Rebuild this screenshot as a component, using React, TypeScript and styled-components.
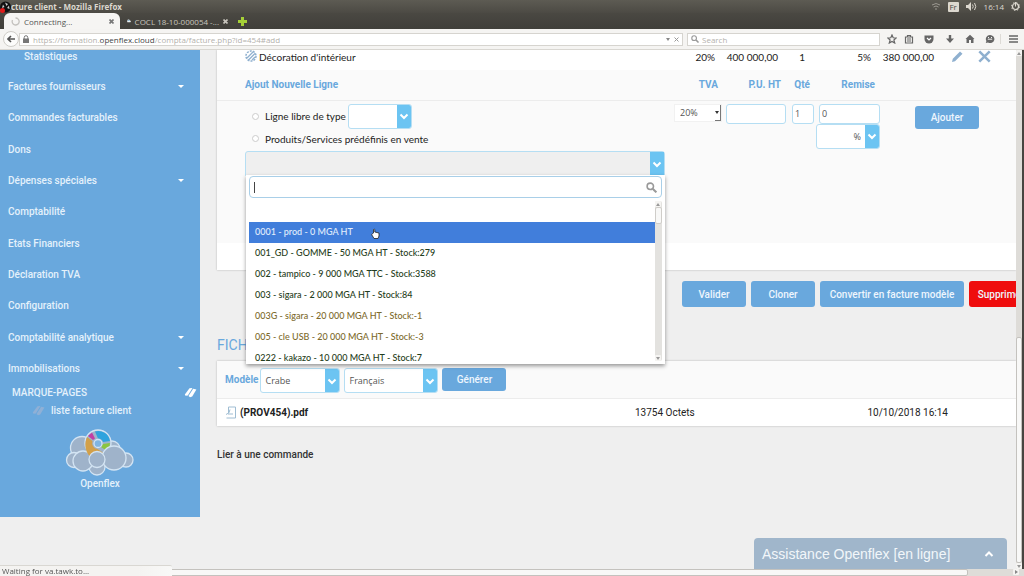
import React from "react";
import styled, { createGlobalStyle } from "styled-components";

const ui = `"Open Sans", "Noto Sans", sans-serif`;
const roboto = `Roboto, "Liberation Sans", sans-serif`;
const lato = `Lato, "Open Sans", sans-serif`;

const Global = createGlobalStyle`
  * { box-sizing: border-box; }
  body { margin: 0; background: #efefef; font-family: ${roboto}; font-size: 10px; color: #333; }
  button, input, select { font: inherit; color: inherit; margin: 0; padding: 0; }
  a { color: inherit; text-decoration: none; }
  ul { list-style: none; margin: 0; padding: 0; }
`;

const Desktop = styled.div`
  display: flex;
  flex-direction: column;
  height: 100vh;
  overflow: hidden;
`;

/* ---------- browser window ---------- */

const TitleBar = styled.header`
  display: flex;
  align-items: center;
  justify-content: space-between;
  flex: none;
  height: 13px;
  padding-right: 4px;
  background: linear-gradient(#5d5b53, #4c4a44);
  color: #dcd8cf;
  font: 8px ${ui};
`;
const WindowTitle = styled.strong`
  display: flex;
  align-items: center;
`;
const Tray = styled.div`
  display: flex;
  align-items: center;
  gap: 7px;
  line-height: 12px;
`;
const Language = styled.span`
  width: 11px;
  height: 10px;
  line-height: 10px;
  text-align: center;
  background: #dcd8cf;
  color: #4c4a44;
  border-radius: 1px;
`;
const TabStrip = styled.nav`
  display: flex;
  flex: none;
  height: 16px;
  padding-left: 4px;
  background: linear-gradient(#4a4842, #403f3a);
  color: #dcd8cf;
  font: 8px ${ui};
`;
const Tab = styled.div<{ $active?: boolean }>`
  display: flex;
  align-items: center;
  gap: 4px;
  width: ${(p) => (p.$active ? 116 : 114)}px;
  padding: 0 6px 0 7px;
  border-radius: 6px 6px 0 0;
  background: ${(p) => (p.$active ? "#f6f5f3" : "transparent")};
  color: ${(p) => (p.$active ? "#555" : "#c9c6be")};
`;
const TabTitle = styled.span`
  flex: 1;
  white-space: nowrap;
`;
const BareButton = styled.button`
  display: flex;
  align-items: center;
  justify-content: center;
  border: 0;
  background: none;
`;
const Toolbar = styled.div`
  display: flex;
  align-items: center;
  flex: none;
  height: 21px;
  padding: 0 6px 0 3px;
  background: #f5f4f2;
  border-bottom: 1px solid #d9d7d2;
  font: 8px ${ui};
  color: #b3b1ac;
`;
const BackButton = styled(BareButton)`
  width: 16px;
  height: 16px;
  border: 1px solid #cfcdc8;
  border-radius: 50%;
  background: #fcfcfb;
`;
const AddressBar = styled.div`
  display: flex;
  align-items: center;
  gap: 4px;
  flex: 1;
  height: 13px;
  padding: 0 3px;
  background: #fff;
  border: 1px solid #d6d4cf;
`;
const Address = styled.span`
  flex: 1;
  b { font-weight: 400; color: #444; }
`;
const SearchBar = styled.label`
  display: flex;
  align-items: center;
  gap: 3px;
  width: 193px;
  height: 13px;
  margin: 0 4px;
  padding: 0 3px;
  background: #fff;
  border: 1px solid #d6d4cf;
  input { flex: 1; min-width: 0; border: 0; outline: 0; background: none; }
  input::placeholder { color: #b3b1ac; }
`;
const ToolbarIcons = styled.div`
  display: grid;
  grid-template-columns: 16px 18px 22px 20px 20px 20px 18px;
  button:last-child { border-left: 1px solid #dddbd6; justify-content: flex-end; }
`;

/* ---------- page frame ---------- */

const Viewport = styled.div`
  display: flex;
  flex: 1;
  min-height: 0;
`;
const Page = styled.div`
  position: relative;
  display: flex;
  align-items: flex-start;
  flex: 1;
  min-width: 0;
  overflow: hidden;
`;
const VerticalBar = styled.div`
  display: flex;
  flex-direction: column;
  width: 8px;
  background: #dedcd8;
  border-right: 2px solid #474541;
`;
const BarSpacer = styled.div`
  flex: 282;
`;
const VerticalThumb = styled.div`
  flex: 225;
  background: #f8f8f7;
  border: 1px solid #c4c2be;
  border-radius: 2px;
`;
const BarEnd = styled.div`
  display: flex;
  align-items: center;
  justify-content: center;
  flex: none;
  width: 6px;
  height: 6px;
  background: #f5f4f2;
  border-radius: 1px;
`;
const HorizontalBar = styled.div`
  display: flex;
  justify-content: space-between;
  flex: none;
  height: 7px;
  padding-right: 5px;
  background: #dedcd8;
`;
const HorizontalThumb = styled.div`
  flex: 0 0 95%;
  background: #f8f8f7;
  border: 1px solid #c4c2be;
  border-radius: 2px;
`;
const StatusLine = styled.output`
  position: fixed;
  left: 0;
  bottom: 0;
  width: 172px;
  height: 11px;
  padding-left: 2px;
  background: linear-gradient(90deg, #f4f3f1 80%, #f8f8f7);
  border-top: 1px solid #d9d7d2;
  border-radius: 0 2px 0 0;
  font: 8px/10px ${ui};
  color: #555;
`;

/* ---------- sidebar ---------- */

const Sidebar = styled.aside`
  flex: none;
  width: 200px;
  height: 467px;
  background: #69a8dd;
  color: #e4f1fb;
  font-weight: 500;
`;
const SubLink = styled.a`
  display: block;
  height: 21px;
  padding-left: 24px;
  line-height: 13px;
`;
const Menu = styled.ul`
  display: grid;
  grid-auto-rows: 1fr;
  height: 313px;
`;
const MenuItem = styled.li`
  display: flex;
  align-items: center;
  padding: 0 16px 0 8px;
  a { flex: 1; }
`;
const Caret = styled.i`
  border: 3px solid transparent;
  border-top-color: #fff;
  border-bottom: 0;
`;
const Bookmarks = styled.div`
  display: flex;
  align-items: center;
  justify-content: space-between;
  height: 16px;
  padding: 0 3px 0 12px;
`;
const BookmarkLink = styled.a`
  display: flex;
  align-items: center;
  gap: 6px;
  height: 20px;
  padding-left: 32px;
`;
const Brand = styled.figure`
  display: flex;
  flex-direction: column;
  align-items: center;
  margin: 9px 0 0;
  line-height: 14px;
`;

/* ---------- main content ---------- */

const Main = styled.main`
  flex: 1;
  min-width: 0;
  padding-left: 17px;
`;
const Card = styled.section`
  background: #fff;
  box-shadow: 0 0 2px rgba(0, 0, 0, 0.25);
`;
const InvoiceCard = styled(Card)`
  padding-bottom: 27px;
`;
const Lines = styled.table`
  width: 100%;
  table-layout: fixed;
  border-collapse: collapse;
  font: 10px ${lato};
  color: #222;
  white-space: nowrap;
  th, td { padding: 0; text-align: right; }
  th:first-child, td:first-child { text-align: left; padding-left: 28px; }
`;
const ItemRow = styled.tr`
  height: 20px;
  line-height: 14px;
  td { vertical-align: top; }
`;
const ItemName = styled.span`
  display: flex;
  gap: 2px;
`;
const ItemActions = styled.span`
  display: flex;
  justify-content: flex-end;
  gap: 14px;
  padding-right: 25px;
`;
const HeadRow = styled.tr`
  height: 30px;
  background: #fafafa;
  border-bottom: 1px solid #ececec;
  color: #69a8dd;
  font-family: ${roboto};
  th { font-weight: 700; }
`;
const FormRow = styled.tr`
  height: 143px;
  background: #fafafa;
  td { vertical-align: top; padding-top: 3px; }
`;
const RightPad = styled.span<{ $pad: number }>`
  display: block;
  padding-right: ${(p) => p.$pad}px;
`;
const Choices = styled.div`
  display: grid;
  grid-template-rows: 25px 20px 30px;
  align-items: center;
`;
const Choice = styled.div`
  display: flex;
  align-items: center;
  padding-left: 7px;
  label { margin: 0 2px 0 6px; }
`;
const Radio = styled.input.attrs({ type: "radio" })`
  appearance: none;
  width: 7px;
  height: 7px;
  border: 1px solid #ccc;
  border-radius: 50%;
  background: #fff;
`;
const SelectBox = styled.span<{ $w: number; $right?: boolean }>`
  display: flex;
  width: ${(p) => p.$w}px;
  height: 25px;
  background: #fff;
  border: 1px solid #b5def3;
  border-radius: 3px;
  overflow: hidden;
  font: 9px ${ui};
  color: #555;
  select {
    flex: 1;
    min-width: 0;
    appearance: none;
    border: 0;
    outline: 0;
    background: none;
    padding: 0 4px;
    text-align: ${(p) => (p.$right ? "right" : "left")};
    text-align-last: ${(p) => (p.$right ? "right" : "left")};
  }
`;
const Arrow = styled.span`
  display: flex;
  align-items: center;
  justify-content: center;
  flex: none;
  width: 14px;
  background: #6cc4f2;
`;
const Cell = styled.div`
  display: flex;
  flex-direction: column;
  align-items: flex-end;
`;
const Field = styled.input<{ $w: number }>`
  width: ${(p) => p.$w}px;
  height: 20px;
  padding: 0 2px;
  background: #fff;
  border: 1px solid #b5def3;
  border-radius: 3px;
  outline: 0;
  font: 9px ${ui};
  color: #555;
`;
const PlainSelect = styled.span`
  display: flex;
  width: 48px;
  height: 18px;
  background: #fff;
  border: 1px solid #f1f1f1;
  font: 9px ${ui};
  color: #555;
  select { flex: 1; min-width: 0; appearance: none; border: 0; background: none; padding-left: 5px; }
`;
const Stepper = styled.span`
  display: flex;
  align-items: center;
  width: 6px;
  border-right: 1px solid #777;
  border-bottom: 1px solid #777;
`;
const DownMark = styled.i<{ $tone?: string }>`
  border: 2px solid transparent;
  border-top: 3px solid ${(p) => p.$tone || "#333"};
  border-bottom: 0;
`;
const UpMark = styled.i`
  border: 2px solid transparent;
  border-bottom: 3px solid #999;
  border-top: 0;
`;
const RightMark = styled.i`
  border: 2px solid transparent;
  border-left: 3px solid #888;
  border-right: 0;
`;
const BlueButton = styled.button<{ $w: number; $h?: number; $danger?: boolean }>`
  flex: none;
  width: ${(p) => p.$w}px;
  height: ${(p) => p.$h || 23}px;
  border: 0;
  border-radius: 3px;
  background: ${(p) => (p.$danger ? "#ef0d0d" : "#69a8dd")};
  color: #eef6fd;
  font: 500 10px ${roboto};
  white-space: nowrap;
`;
const AddCell = styled.div`
  display: flex;
  justify-content: flex-end;
  padding: 2px 37px 0 0;
`;

/* ---------- product picker ---------- */

const Picker = styled.div`
  position: relative;
  width: 420px;
  height: 25px;
  display: flex;
  justify-content: flex-end;
  background: #efefef;
  border: 1px solid #b5def3;
  border-radius: 3px 3px 0 0;
`;
const PickerPanel = styled.div`
  position: absolute;
  z-index: 2;
  top: 23px;
  left: 0;
  right: -1px;
  padding: 1px 3px 3px;
  background: #fff;
  box-shadow: 0 2px 4px rgba(0, 0, 0, 0.4);
`;
const PickerSearch = styled.label`
  display: flex;
  align-items: center;
  height: 22px;
  padding: 0 4px;
  border: 1px solid #a9cfe8;
  border-radius: 4px;
  input { flex: 1; border: 0; outline: 0; background: none; }
`;
const InputCaret = styled.i`
  width: 1px;
  height: 11px;
  background: #444;
`;
const ListArea = styled.div`
  display: flex;
  height: 160px;
  margin-top: 3px;
  overflow: hidden;
`;
const Options = styled.ul`
  flex: 1;
  font-size: 9px;
  font-weight: 500;
`;
const Option = styled.li<{ $tone?: string }>`
  position: relative;
  height: 21px;
  padding-left: 6px;
  line-height: 20px;
  background: ${(p) => (p.$tone === "active" ? "#417edb" : "transparent")};
  color: ${(p) => (p.$tone === "active" ? "#e3eefc" : p.$tone === "low" ? "#7d6a2c" : "#1f3d20")};
`;
const Pointer = styled.svg`
  position: absolute;
  left: 122px;
  top: 6px;
`;
const ListBar = styled.div`
  display: flex;
  flex-direction: column;
  width: 7px;
  background: #e3e2df;
  border-radius: 2px;
`;
const ListThumb = styled.div`
  height: 17px;
  border: 1px solid #cfcdc9;
  border-radius: 2px;
  background: #f8f8f7;
`;
const Grow = styled.div`
  flex: 1;
`;

/* ---------- lower part ---------- */

const Actions = styled.div`
  display: flex;
  justify-content: flex-end;
  gap: 5px;
  margin: 11px -17px 0 0;
`;
const Heading = styled.h2`
  margin: 29px 0 7px;
  font: 14px/18px ${roboto};
  color: #69a8dd;
`;
const Generator = styled.form`
  display: flex;
  align-items: flex-start;
  gap: 4px;
  height: 38px;
  padding: 7px 8px 0;
  background: #fafafa;
  border-bottom: 1px solid #ececec;
`;
const ModelLabel = styled.label`
  line-height: 23px;
  margin-right: -2px;
  font-weight: 700;
  color: #69a8dd;
`;
const FileRow = styled.div`
  display: grid;
  grid-template-columns: 410px 1fr auto;
  align-items: center;
  height: 27px;
  padding: 0 68px 0 8px;
  color: #222;
`;
const FileLink = styled.a`
  display: flex;
  align-items: center;
  gap: 3px;
  font-weight: 700;
`;
const LinkOrder = styled.a`
  display: block;
  margin-top: 21px;
  line-height: 16px;
  font-weight: 500;
`;
const Chat = styled.button`
  position: absolute;
  right: 9px;
  bottom: 0;
  display: flex;
  align-items: center;
  justify-content: space-between;
  width: 253px;
  height: 31px;
  padding: 0 13px 0 8px;
  border: 0;
  border-radius: 4px 4px 0 0;
  background: #a0b6cb;
  color: #f2f6fa;
  font: 14px "Liberation Sans", sans-serif;
`;

/* ---------- drawings ---------- */

const Chevron = ({ up = false }: { up?: boolean }) => (
  <svg width="10" height="8" viewBox="0 0 10 8" fill="none" stroke="#fff" strokeWidth="2">
    <path d={up ? "M1.5 6 5 2.5 8.5 6" : "M1.5 2.5 5 6 8.5 2.5"} />
  </svg>
);
const Cross = ({ size = 6, color = "#777", w = 1.6 }: { size?: number; color?: string; w?: number }) => (
  <svg width={size} height={size} viewBox="0 0 10 10" stroke={color} strokeWidth={(w * 10) / size}>
    <path d="M1 1 9 9M9 1 1 9" />
  </svg>
);
const Magnifier = ({ size = 9, color = "#999" }: { size?: number; color?: string }) => (
  <svg width={size} height={size} viewBox="0 0 12 12" fill="none" stroke={color} strokeWidth="1.7">
    <circle cx="4.7" cy="4.7" r="3.5" />
    <path d="m7.3 7.3 4 4" strokeWidth="2.2" />
  </svg>
);
const Books = ({ color }: { color: string }) => (
  <svg width="13" height="11" viewBox="0 0 13 11" fill={color}>
    <path d="M.8 7.500 5.500 1.200 8.500 1 3.800 8.500 1.500 8.800Z" />
    <path d="M4.500 9 9.200 1.800 12.400 2.600 8.200 9.500 6 10.300Z" />
  </svg>
);
const CloudLogo = () => (
  <svg width="70" height="48" viewBox="0 0 70 48" fill="#9fb3ca" stroke="#d3e4f3" strokeWidth="1.3">
    <circle cx="17" cy="19" r="11.5" />
    <circle cx="47" cy="20" r="8" />
    <circle cx="9" cy="31" r="7.5" />
    <circle cx="61" cy="31" r="7" />
    <circle cx="32" cy="38" r="8" />
    <circle cx="18" cy="32" r="10" />
    <circle cx="33" cy="14" r="13" />
    <g stroke="none">
      <path d="M30 2.400A12 12 0 0 1 45 12l-7 1a5 5 0 0 0-5-3.500Z" fill="#2fa3de" />
      <path d="M45 14a12 12 0 0 1-3 8l-6-4 2-3Z" fill="#8bc540" />
      <path d="m23 7 4-3.500 3 6-2 1.500Z" fill="#c13fa5" />
      <path d="m22 8 5.500 4a6 6 0 0 0 5 8l6 4-14 3c-5-6-5-13-2.500-19Z" fill="#d2a04a" />
    </g>
    <circle cx="33" cy="14.500" r="4" fill="#7fb5e2" />
    <circle cx="49" cy="29" r="12" />
    <circle cx="32" cy="30.500" r="8" />
  </svg>
);
const Glyph = ({ children }: { children: React.ReactNode }) => (
  <svg width="10" height="10" viewBox="0 0 10 10" fill="#666" stroke="#666" strokeWidth="0">
    {children}
  </svg>
);

const menu: [string, boolean][] = [
  ["Factures fournisseurs", true],
  ["Commandes facturables", false],
  ["Dons", false],
  ["Dépenses spéciales", true],
  ["Comptabilité", false],
  ["Etats Financiers", false],
  ["Déclaration TVA", false],
  ["Configuration", false],
  ["Comptabilité analytique", true],
  ["Immobilisations", true],
];

const products: [string, string][] = [
  ["001_GD - GOMME - 50 MGA HT - Stock:279", "ok"],
  ["002 - tampico - 9 000 MGA TTC - Stock:3588", "ok"],
  ["003 - sigara - 2 000 MGA HT - Stock:84", "ok"],
  ["003G - sigara - 20 000 MGA HT - Stock:-1", "low"],
  ["005 - cle USB - 20 000 MGA HT - Stock:-3", "low"],
  ["0222 - kakazo - 10 000 MGA HT - Stock:7", "ok"],
];

function Browser() {
  return (
    <>
      <TitleBar>
        <WindowTitle>
          <svg width="11" height="12" viewBox="0 0 11 12">
            <circle cx="5.500" cy="6" r="5.500" fill="#111" />
            <path d="M5 1.500 8 3 6.500 5Zm4 3 .5 3.500L7 7ZM3 3.500l1.500 2.500L2 7Z" fill="#ccc" />
            <circle cx="2.500" cy="9.500" r="2.500" fill="#e01b1b" />
          </svg>
          cture client - Mozilla Firefox
        </WindowTitle>
        <Tray>
          <svg width="10" height="9" viewBox="0 0 10 9" fill="none" stroke="#9a978f">
            <path d="M1 3q4-3 8 0M2.500 5q2.500-2 5 0M4 7h2" />
          </svg>
          <Language>Fr</Language>
          <svg width="11" height="9" viewBox="0 0 11 9" fill="#dcd8cf" stroke="#dcd8cf">
            <path d="M0 3h2l3-3v9L2 6H0Z" stroke="none" />
            <path d="M6.500 2.500q1.500 2 0 4M8.500 1q2.500 3.500 0 7" fill="none" />
          </svg>
          <time>16:14</time>
          <svg width="9" height="9" viewBox="0 0 9 9" fill="none" stroke="#dcd8cf">
            <circle cx="4.500" cy="4.500" r="3" strokeWidth="1.200" />
            <circle cx="4.500" cy="4.500" r="4" strokeDasharray="1.500 1.640" />
            <path d="M4.500 0v4.500" />
          </svg>
        </Tray>
      </TitleBar>
      <TabStrip>
        <Tab $active>
          <svg width="9" height="9" viewBox="0 0 9 9" fill="none" stroke="#c4c2be" strokeWidth="1.300">
            <path d="M4.500 1a3.500 3.500 0 1 1-3 2" />
          </svg>
          <TabTitle>Connecting...</TabTitle>
          <BareButton aria-label="Close tab"><Cross size={5} /></BareButton>
        </Tab>
        <Tab>
          <svg width="9" height="8" viewBox="0 0 9 8">
            <path d="M1 7a2 2 0 0 1 0-3 3 3 0 0 1 6-1 2 2 0 0 1 1 4Z" fill="#e8eef2" />
            <circle cx="4.500" cy="2.500" r="1.500" fill="#65a7c9" />
          </svg>
          <TabTitle>COCL 18-10-000054 -...</TabTitle>
          <BareButton aria-label="Close tab"><Cross size={5} color="#c9c6be" /></BareButton>
        </Tab>
        <BareButton aria-label="New tab">
          <svg width="13" height="9" viewBox="-4 0 13 9">
            <path d="M3 0h3v3h3v3H6v3H3V6H0V3h3Z" fill="#a5d037" />
          </svg>
        </BareButton>
      </TabStrip>
      <Toolbar>
        <BackButton aria-label="Back">
          <svg width="8" height="8" viewBox="0 0 8 8" fill="none" stroke="#555" strokeWidth="1.600">
            <path d="M8 4H1.500M4 1 1 4l3 3" />
          </svg>
        </BackButton>
        <AddressBar>
          <svg width="6" height="8" viewBox="0 0 6 8">
            <path d="M0 3.500h6V8H0Z" fill="#777" />
            <path d="M1.200 4V2.500a1.800 1.800 0 0 1 3.600 0V4" fill="none" stroke="#777" />
          </svg>
          <Address>
            https://formation.<b>openflex.cloud</b>/compta/facture.php?id=454#add
          </Address>
          <DownMark $tone="#888" />
          <BareButton aria-label="Stop"><Cross size={5} color="#999" w={1} /></BareButton>
        </AddressBar>
        <SearchBar>
          <Magnifier size={8} />
          <input placeholder="Search" aria-label="Search the web" />
        </SearchBar>
        <ToolbarIcons>
          <BareButton aria-label="Bookmark"><Glyph><path d="m5 1 1.200 2.800 3 .2-2.300 2 .8 3L5 7.400 2.300 9l.8-3L.8 4l3-.2Z" fill="none" strokeWidth="1.200" /></Glyph></BareButton>
          <BareButton aria-label="Library"><Glyph><path d="M1.500 3h7v6h-7ZM3.500 3V1.500h3V3M3 5h4M3 7h4" fill="none" strokeWidth="1.200" /></Glyph></BareButton>
          <BareButton aria-label="Pocket"><Glyph><path d="M.5 1.500h9V5a4.500 4.500 0 0 1-9 0Z" /><path d="m3 4 2 2 2-2" fill="none" stroke="#fff" strokeWidth="1.200" /></Glyph></BareButton>
          <BareButton aria-label="Downloads"><Glyph><path d="M3.800 1h2.400v3.500H9L5 9 1 4.500h2.800Z" /></Glyph></BareButton>
          <BareButton aria-label="Home"><Glyph><path d="M5 .8 9.500 5H8.500v4H6V6H4v3H1.500V5h-1Z" /></Glyph></BareButton>
          <BareButton aria-label="Chat"><Glyph><path d="M5 1a4.300 4 0 1 1-2 7.500L.8 9l.6-2A4 4 0 0 1 5 1Z" /><path d="M2.800 5.200h4.400M3 3.500h1M6 3.500h1" stroke="#f5f4f2" strokeWidth="1" /></Glyph></BareButton>
          <BareButton aria-label="Menu"><Glyph><path d="M1 2h9M1 5h9M1 8h9" strokeWidth="1.500" /></Glyph></BareButton>
        </ToolbarIcons>
      </Toolbar>
    </>
  );
}

function ProductPicker() {
  return (
    <Picker>
      <Arrow><Chevron /></Arrow>
      <PickerPanel>
        <PickerSearch>
          <InputCaret />
          <input aria-label="Rechercher un produit" />
          <Magnifier size={11} color="#999" />
        </PickerSearch>
        <ListArea>
          <Options role="listbox">
            <Option role="option" />
            <Option role="option" $tone="active">
              0001 - prod - 0 MGA HT
              <Pointer width="9" height="11" viewBox="0 0 9 11">
                <path d="M2.500 5V1.500q.7-.8 1.300 0V4L8 5v3L7 10.500H3L.6 6.500Z" fill="#fff" stroke="#222" strokeWidth=".8" />
              </Pointer>
            </Option>
            {products.map(([text, tone]) => (
              <Option key={text} role="option" $tone={tone}>{text}</Option>
            ))}
          </Options>
          <ListBar>
            <BarEnd><UpMark /></BarEnd>
            <ListThumb />
            <Grow />
            <BarEnd><DownMark $tone="#999" /></BarEnd>
          </ListBar>
        </ListArea>
      </PickerPanel>
    </Picker>
  );
}

function Invoice() {
  return (
    <InvoiceCard>
      <Lines>
        <colgroup>
          <col />
          <col style={{ width: 48 }} />
          <col style={{ width: 64 }} />
          <col style={{ width: 28 }} />
          <col style={{ width: 66 }} />
          <col style={{ width: 56 }} />
          <col style={{ width: 80 }} />
        </colgroup>
        <tbody>
          <ItemRow>
            <td>
              <ItemName>
                <svg width="12" height="12" viewBox="0 0 12 12" fill="none" stroke="#8fb0cf">
                  <circle cx="6" cy="6" r="5" strokeWidth="1.500" strokeDasharray="2 1.100" />
                  <path d="m2 8 6-6M3.500 10 10 3.500M7 10l3-3" strokeWidth="1.300" />
                </svg>
                Décoration d'intérieur
              </ItemName>
            </td>
            <td><RightPad $pad={7}>20%</RightPad></td>
            <td><RightPad $pad={8}>400 000,00</RightPad></td>
            <td><RightPad $pad={9}>1</RightPad></td>
            <td><RightPad $pad={9}>5%</RightPad></td>
            <td><RightPad $pad={2}>380 000,00</RightPad></td>
            <td>
              <ItemActions>
                <svg width="14" height="13" viewBox="0 0 14 13" fill="#8fb0cf">
                  <path d="m2 12 .8-3.200L10 1.500l2.500 2.300L5 11.200ZM11 .8 13.500 3" />
                </svg>
                <Cross size={13} color="#8fb0cf" w={2.500} />
              </ItemActions>
            </td>
          </ItemRow>
          <HeadRow>
            <th scope="col">Ajout Nouvelle Ligne</th>
            <th scope="col"><RightPad $pad={4}>TVA</RightPad></th>
            <th scope="col"><RightPad $pad={5}>P.U. HT</RightPad></th>
            <th scope="col"><RightPad $pad={4}>Qté</RightPad></th>
            <th scope="col"><RightPad $pad={5}>Remise</RightPad></th>
            <th colSpan={2} />
          </HeadRow>
          <FormRow>
            <td>
              <Choices>
                <Choice>
                  <Radio id="free" name="kind" />
                  <label htmlFor="free">Ligne libre de type</label>
                  <SelectBox $w={64}>
                    <select aria-label="Type de ligne"><option /></select>
                    <Arrow><Chevron /></Arrow>
                  </SelectBox>
                </Choice>
                <Choice>
                  <Radio id="preset" name="kind" />
                  <label htmlFor="preset">Produits/Services prédéfinis en vente</label>
                </Choice>
                <ProductPicker />
              </Choices>
            </td>
            <td>
              <PlainSelect>
                <select aria-label="TVA"><option>20%</option></select>
                <Stepper><DownMark /></Stepper>
              </PlainSelect>
            </td>
            <td><Cell><Field $w={60} aria-label="P.U. HT" /></Cell></td>
            <td><Cell><Field $w={22} aria-label="Qté" defaultValue="1" /></Cell></td>
            <td>
              <Cell>
                <Field $w={61} aria-label="Remise" defaultValue="0" />
                <SelectBox $w={64} $right>
                  <select aria-label="Type de remise"><option>%</option></select>
                  <Arrow><Chevron /></Arrow>
                </SelectBox>
              </Cell>
            </td>
            <td colSpan={2}>
              <AddCell><BlueButton $w={64}>Ajouter</BlueButton></AddCell>
            </td>
          </FormRow>
        </tbody>
      </Lines>
    </InvoiceCard>
  );
}

export default function App() {
  return (
    <Desktop>
      <Global />
      <Browser />
      <Viewport>
        <Page>
          <Sidebar>
            <SubLink href="#stats">Statistiques</SubLink>
            <Menu>
              {menu.map(([label, open]) => (
                <MenuItem key={label}>
                  <a href="#menu">{label}</a>
                  {open && <Caret />}
                </MenuItem>
              ))}
            </Menu>
            <Bookmarks>MARQUE-PAGES <Books color="#fff" /></Bookmarks>
            <BookmarkLink href="#liste"><Books color="#8fb0d6" />liste facture client</BookmarkLink>
            <Brand>
              <CloudLogo />
              <figcaption>Openflex</figcaption>
            </Brand>
          </Sidebar>
          <Main>
            <Invoice />
            <Actions>
              <BlueButton $w={64} $h={26}>Valider</BlueButton>
              <BlueButton $w={64} $h={26}>Cloner</BlueButton>
              <BlueButton $w={144} $h={26}>Convertir en facture modèle</BlueButton>
              <BlueButton $w={64} $h={26} $danger>Supprimer</BlueButton>
            </Actions>
            <Heading>FICH</Heading>
            <Card>
              <Generator>
                <ModelLabel htmlFor="model">Modèle</ModelLabel>
                <SelectBox $w={80}>
                  <select id="model"><option>Crabe</option></select>
                  <Arrow><Chevron /></Arrow>
                </SelectBox>
                <SelectBox $w={94}>
                  <select aria-label="Langue"><option>Français</option></select>
                  <Arrow><Chevron /></Arrow>
                </SelectBox>
                <BlueButton $w={64} type="button">Générer</BlueButton>
              </Generator>
              <FileRow>
                <FileLink href="#pdf">
                  <svg width="12" height="13" viewBox="0 0 12 13" fill="none" stroke="#9fbdd3">
                    <path d="M3.500 1h7v11h-9M3.500 1v6M1 8.500q4-1 4-5M3 8h5" />
                  </svg>
                  (PROV454).pdf
                </FileLink>
                <span>13754 Octets</span>
                <span>10/10/2018 16:14</span>
              </FileRow>
            </Card>
            <LinkOrder href="#commande">Lier à une commande</LinkOrder>
          </Main>
          <Chat>Assistance Openflex [en ligne]<Chevron up /></Chat>
        </Page>
        <VerticalBar>
          <BarEnd><UpMark /></BarEnd>
          <BarSpacer />
          <VerticalThumb />
          <BarEnd><DownMark $tone="#999" /></BarEnd>
        </VerticalBar>
      </Viewport>
      <HorizontalBar>
        <HorizontalThumb />
        <BarEnd><RightMark /></BarEnd>
      </HorizontalBar>
      <StatusLine>Waiting for va.tawk.to...</StatusLine>
    </Desktop>
  );
}
